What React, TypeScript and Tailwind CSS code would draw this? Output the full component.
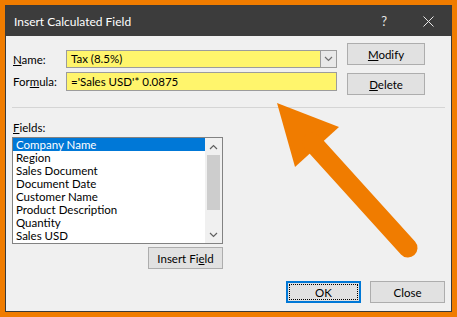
import React from "react";

function Chevron({ up = false, color = "#606060" }: { up?: boolean; color?: string }) {
  return (
    <svg width="9" height="6" viewBox="0 0 9 6">
      <path
        d={up ? "M1 5 L4.5 1.5 L8 5" : "M1 1 L4.5 4.5 L8 1"}
        fill="none"
        stroke={color}
        strokeWidth="1.2"
      />
    </svg>
  );
}

const fields = [
  "Company Name",
  "Region",
  "Sales Document",
  "Document Date",
  "Customer Name",
  "Product Description",
  "Quantity",
  "Sales USD",
];

export default function App() {
  return (
    <div className="relative w-[457px] h-[317px] bg-[#f07c00] p-[5px] font-['Lato',sans-serif] text-[11.5px] text-black leading-[15px]">
      <div className="flex flex-col h-full border border-[#3a3a3a] bg-[#f0f0f0]">
        {/* title bar */}
        <div className="h-[30px] shrink-0 bg-[#3c3c3c] flex items-center pl-[8px] text-white text-[12px]">
          <span>Insert Calculated Field</span>
          <span className="ml-auto text-[13px] text-[#e8e8e8]">?</span>
          <svg className="ml-[36px] mr-[17px]" width="11" height="11" viewBox="0 0 11 11">
            <path d="M0.5 0.5 L10.5 10.5 M10.5 0.5 L0.5 10.5" stroke="#e8e8e8" strokeWidth="1" />
          </svg>
        </div>

        {/* body */}
        <div className="flex flex-col px-[6px] pt-[7px]">
          <div className="flex gap-[10px]">
            <div className="flex flex-col w-[325px] pt-[7px] gap-[4px]">
              <div className="flex items-center h-[18px]">
                <span className="w-[54px] pl-[1px]">
                  <u>N</u>ame:
                </span>
                <div className="flex-1 h-full flex border border-[#9c9c9c] bg-[#fff56c]">
                  <span className="flex-1 pl-[4px] leading-[16px]">Tax (8.5%)</span>
                  <div className="w-[16px] h-full border-l border-[#9c9c9c] bg-[#e9e9e9] flex items-center justify-center">
                    <Chevron color="#707070" />
                  </div>
                </div>
              </div>
              <div className="flex items-center h-[19px]">
                <span className="w-[54px] pl-[1px]">
                  For<u>m</u>ula:
                </span>
                <div className="flex-1 h-full border border-[#9c9c9c] bg-[#fff56c] pl-[4px] leading-[17px]">
                  ='Sales USD'* 0.0875
                </div>
              </div>
            </div>
            <div className="flex flex-col gap-[8px]">
              <div className="w-[78px] h-[22px] border border-[#adadad] bg-[#e1e1e1] flex items-center justify-center">
                <span>
                  <u>M</u>odify
                </span>
              </div>
              <div className="w-[78px] h-[22px] border border-[#adadad] bg-[#e1e1e1] flex items-center justify-center">
                <span>
                  <u>D</u>elete
                </span>
              </div>
            </div>
          </div>

          <div className="mt-[12px] h-px bg-[#d5d5d5]" />

          <div className="mt-[12px] pl-[1px]">
            <u>F</u>ields:
          </div>

          <div className="flex flex-col w-[211px] mt-[2px]">
            <div className="h-[107px] border border-[#828282] bg-white flex">
              <div className="flex-1 flex flex-col">
                {fields.map((f, i) => (
                  <div
                    key={f}
                    className={
                      i === 0
                        ? "h-[13px] leading-[13px] pl-[3px] bg-[#0078d7] text-white"
                        : "h-[13px] leading-[13px] pl-[3px]"
                    }
                  >
                    {f}
                  </div>
                ))}
              </div>
              <div className="w-[17px] bg-[#f0f0f0] flex flex-col">
                <div className="h-[17px] flex items-center justify-center">
                  <Chevron up />
                </div>
                <div className="h-[55px] mx-[2px] bg-[#cdcdcd]" />
                <div className="flex-1" />
                <div className="h-[17px] flex items-center justify-center">
                  <Chevron />
                </div>
              </div>
            </div>
            <div className="self-end mt-[3px] w-[75px] h-[22px] border border-[#adadad] bg-[#e1e1e1] flex items-center justify-center">
              <span>
                Insert Fi<u>e</u>ld
              </span>
            </div>
          </div>

          <div className="flex justify-end gap-[9px] mt-[12px]">
            <div className="w-[75px] h-[22px] border-2 border-[#0078d7] bg-[#e1e1e1] flex p-px">
              <div className="flex-1 border border-dotted border-black flex items-center justify-center">
                OK
              </div>
            </div>
            <div className="w-[75px] h-[22px] border border-[#adadad] bg-[#e1e1e1] flex items-center justify-center">
              Close
            </div>
          </div>
        </div>
      </div>

      {/* annotation arrow */}
      <svg
        className="absolute inset-0 pointer-events-none"
        width="457"
        height="317"
        viewBox="0 0 457 317"
      >
        <polygon points="277,103 339,127 295,167" fill="#f07c00" />
        <line
          x1="312"
          y1="142"
          x2="408"
          y2="248"
          stroke="#f07c00"
          strokeWidth="19"
          strokeLinecap="round"
        />
      </svg>
    </div>
  );
}
